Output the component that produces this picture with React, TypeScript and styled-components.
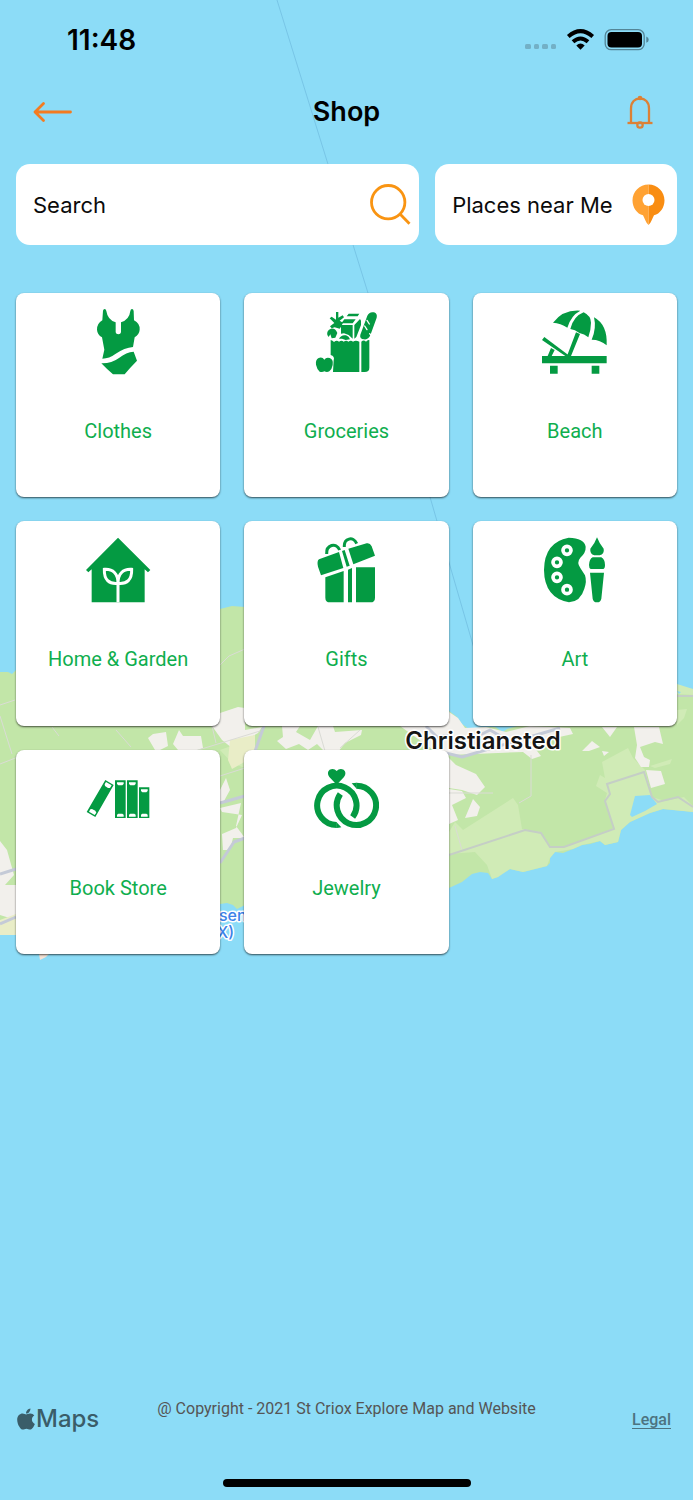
import React from 'react';
import styled, { createGlobalStyle } from 'styled-components';
import { FaApple } from 'react-icons/fa';

const GlobalStyle = createGlobalStyle`
  * { box-sizing: border-box; }
  body { margin: 0; background: #8cdcf7; }
`;

const ui = `Inter, "Liberation Sans", sans-serif`;
const label = `Roboto, "Liberation Sans", sans-serif`;

const Screen = styled.div`
  position: relative;
  min-height: 100vh;
  display: flex;
  flex-direction: column;
  overflow: hidden;
  background: #8cdcf7;
  font-family: ${ui};
  color: #000;
`;

const MapLayer = styled.svg`
  position: absolute;
  inset: 0;
  width: 100%;
  height: 100%;
`;

const Content = styled.div`
  position: relative;
  flex: 1;
  display: flex;
  flex-direction: column;
`;

const StatusBar = styled.div`
  display: flex;
  align-items: center;
  justify-content: space-between;
  height: 80px;
  padding: 0 44px 0 67px;
`;

const Time = styled.span`
  font-size: 28px;
  line-height: 32px;
  font-weight: 600;
`;

const Header = styled.header`
  display: grid;
  grid-template-columns: 1fr auto 1fr;
  align-items: center;
  height: 64px;
  padding: 0 32px;
`;

const Title = styled.h1`
  margin: 0;
  font-size: 27px;
  line-height: 32px;
  font-weight: 600;
`;

const IconButton = styled.button<{ $end?: boolean }>`
  display: flex;
  padding: 0;
  border: 0;
  background: none;
  cursor: pointer;
  justify-self: ${(p) => (p.$end ? 'end' : 'start')};
`;

const Filters = styled.div`
  display: grid;
  grid-template-columns: minmax(0, 5fr) minmax(0, 3fr);
  gap: 16px;
  padding: 20px 16px 48px;
`;

const SearchBox = styled.form`
  display: flex;
  align-items: center;
  height: 81px;
  padding: 0 8px 0 17px;
  border-radius: 14px;
  background: #fff;
`;

const SearchInput = styled.input`
  flex: 1;
  min-width: 0;
  padding: 0;
  border: 0;
  outline: 0;
  background: none;
  font: 400 22px/28px ${ui};
  color: #000;
  &::placeholder { color: #0b0b0b; opacity: 1; }
`;

const NearButton = styled.button`
  display: flex;
  align-items: center;
  justify-content: space-between;
  height: 81px;
  padding: 0 12px 0 17px;
  border: 0;
  border-radius: 14px;
  background: #fff;
  font: 400 22px/28px ${ui};
  color: #0b0b0b;
  white-space: nowrap;
  cursor: pointer;
`;

const Grid = styled.main`
  display: grid;
  grid-template-columns: repeat(3, 1fr);
  gap: 24px;
  padding: 0 16px;
`;

const Card = styled.button`
  display: flex;
  flex-direction: column;
  align-items: center;
  gap: 44px;
  aspect-ratio: 1;
  padding: 16px 0 0;
  border: 0;
  border-radius: 8px;
  background: #fff;
  box-shadow: 0 1px 2px rgba(0, 0, 0, 0.65);
  font: 400 20px/24px ${label};
  color: #0fae4e;
  cursor: pointer;
`;

const CardIcon = styled.svg`
  width: 66px;
  height: 66px;
  flex: none;
  fill: #049a42;
`;

const Footer = styled.footer`
  display: grid;
  grid-template-columns: 1fr auto 1fr;
  height: 35px;
  margin: auto 16px 47px;
`;

const MapsLogo = styled.div`
  display: flex;
  align-items: center;
  align-self: end;
  height: 26px;
  font-size: 24px;
  line-height: 24px;
  font-weight: 500;
  color: #3a5d69;

  svg { margin: 0 -2px; }
`;

const Copyright = styled.p`
  margin: 0;
  font: 400 16px/24px ${label};
  color: #555;
`;

const Legal = styled.a`
  align-self: end;
  justify-self: end;
  margin-right: 6px;
  font: 500 16px/24px ${label};
  color: #4c7380;
  text-underline-offset: 3px;
`;

const HomeIndicator = styled.div`
  align-self: center;
  width: 248px;
  height: 8px;
  margin-bottom: 13px;
  border-radius: 4px;
  background: #000;
`;

const IslandMap = () => (
  <MapLayer viewBox="0 0 693 1500" preserveAspectRatio="xMidYMid slice" aria-hidden="true">
    <path d="M277 0 L368 293 L430 497 L473 645 L490 700" fill="none" stroke="#78c5e6" strokeWidth="1" />
    <path
      fill="#c2e6a8"
      d="M0 672 L8 672 L12 674 L17 669 L80 650 L150 625 L220 609 L232 606 L245 607 L330 640 L400 680 L449 711 L457 717 L462 724 L470 730 L483 727 L495 727 L503 732 L507 729 L530 722 L600 705 L677 684 L681 688 L693 689 V812 L684 811 L663 809 L650 813 L630 822 L621 830 L618 842 L605 845 L600 841 L590 844 L582 845 L573 849 L563 853 L555 852 L550 858 L550 863 L547 866 L523 872 L510 869 L503 873 L498 877 L492 879 L488 873 L480 872 L472 874 L462 882 L449 888 L350 920 L245 905 L237 909 L233 905 L227 903 L220 904 L120 925 L16 935 L0 935 Z"
    />
    <path
      fill="#d0ebb6"
      d="M449 832 L455 822 L463 830 L513 798 L518 805 L522 829 L541 832 L550 847 L565 847 L614 828 L605 800 L607 793 L596 786 L600 775 L605 778 L602 762 L628 748 L633 758 L645 770 L652 797 L665 801 L684 797 L693 806 V812 L663 809 L650 813 L630 822 L621 830 L618 842 L605 845 L600 841 L582 845 L573 849 L555 852 L550 858 L547 866 L523 872 L510 869 L498 877 L492 879 L487 865 L475 852 L449 854 Z"
    />
    <path fill="#d0ebb6" d="M650 766 L672 759 L670 764 L655 768 Z M677 710 L687 709 L684 718 L677 725 Z M220 750 L245 741 V768 L232 763 Z M677 684 L693 689 V695 L677 694 Z" />
    <path fill="#8cdcf7" d="M635 796 L650 795 L657 804 L645 811 L632 817 L630 815 Z M677 691 L681 692 L679 694 Z" />
    <g fill="#f2f0ec">
      <path d="M148 738 L153 734 L166 732 L168 746 L160 750 H155 Z M173 744 L179 730 L183 736 L201 736 L203 748 L195 751 L178 750 Z M212 726 L220 713 L238 707 L245 708 V730 L262 727 L258 733 L232 748 L222 740 Z" />
      <path d="M277 741 L283 737 L282 726 L300 726 L296 732 L310 740 L318 726 L333 726 L335 732 L362 730 L361 735 L345 743 L338 752 H325 L317 744 L308 750 L299 744 L286 749 Z" />
      <path d="M400 726 L449 712 L458 718 L465 728 L486 727 L506 732 L530 726 L570 728 L573 734 L550 739 L542 743 L530 742 L541 756 L532 759 L523 752 L449 755 L432 749 Z" />
      <path d="M582 751 L592 741 L600 747 L589 751 Z M602 727 H617 L610 737 Z M602 751 L609 752 L604 756 Z M634 727 H659 L663 744 L655 742 L640 747 L644 757 L650 760 L649 767 L641 767 L635 758 L637 745 Z M646 770 L661 771 L665 784 L651 788 Z" />
      <path d="M449 758 L456 765 L476 774 L485 787 L477 795 L462 790 L449 788 Z M449 789 L462 791 L466 798 L452 805 L458 820 L449 824 Z M473 799 L480 807 L477 816 L465 818 Z" />
      <path d="M226 778 L230 790 L224 801 L220 803 V790 Z M220 808 L241 803 L236 826 L245 838 H233 L230 850 L223 850 L222 834 L236 828 L242 815 L222 812 Z M0 841 L7 850 L14 875 L5 885 L16 885 V920 L0 915 Z" />
    </g>
    <path fill="#e9edc7" d="M0 920 L16 914 V935 H0 Z M230 740 L255 735 V756 L232 769 L228 760 Z" />
    <path fill="#f5e2d5" d="M39 954 L49 954 L46 957 L40 960 Z" />
    <g fill="none" stroke="#dadbd5" strokeWidth="1">
      <path d="M0 705 L15 700 M0 764 L18 757 M0 716 L12 754 M52 727 L59 736 M116 730 L131 747 M220 665 L229 656 L245 649 M195 751 L260 731 M212 726 L216 743 M220 776 L245 768 M318 727 L325 751 M360 730 L340 748 M449 793 L493 793 M531 755 V796 L519 803 M455 826 L462 850" />
    </g>
    <g fill="none" stroke="#c4cad7" strokeWidth="3" strokeLinejoin="round">
      <path d="M264 726 L254 754 M220 803 L245 796 M220 863 L234 842 L245 838 M0 874 L16 869 M0 924 L16 917" />
      <path d="M426 726 L437 737 L452 735 M446 753 L462 757 L560 728 M472 739 L490 730 L502 737" />
    </g>
    <path
      d="M449 855 L525 830 L541 833 L550 847 H564 L614 829 L605 801 L610 794 L607 784 L644 772 L652 797 L658 802 L678 797 L693 807 M677 696 H693"
      fill="none"
      stroke="#c5cec6"
      strokeWidth="2"
    />
    <g fontFamily={ui} stroke="#fff" strokeWidth="3" strokeLinejoin="round" paintOrder="stroke">
      <text x="483" y="749" fontSize="24" fontWeight="600" fill="#151515" textAnchor="middle">Christiansted</text>
      <text x="219" y="921" fontSize="16" fontWeight="500" fill="#3b82e8">sen</text>
      <text x="217" y="938" fontSize="16" fontWeight="500" fill="#3b82e8">X)</text>
    </g>
  </MapLayer>
);

const StatusIcons = () => (
  <svg width="124" height="22" viewBox="0 0 124 22" aria-hidden="true">
    <g fill="#73b0c6">
      <rect x="0" y="15" width="6" height="5" rx="1.5" />
      <rect x="9" y="15" width="5" height="5" rx="1.5" />
      <rect x="17" y="15" width="6" height="5" rx="1.5" />
      <rect x="26" y="15" width="5" height="5" rx="1.5" />
    </g>
    <g fill="none" stroke="#000" strokeWidth="4">
      <path d="M43.300 7.500 Q55.500 -3.200 67.700 7.500" />
      <path d="M48 12.800 Q55.500 6.200 63 12.800" />
    </g>
    <path d="M51.300 16.400 Q55.500 12.400 59.700 16.400 L55.500 20.800 Z" />
    <rect x="80.200" y="0.700" width="39" height="20" rx="6" fill="none" stroke="#538597" strokeWidth="1.300" />
    <rect x="82.500" y="3" width="34.500" height="15.400" rx="4" />
    <path d="M121.300 7.500 Q123.700 8.400 123.700 10.700 Q123.700 13 121.300 13.800 Z" fill="#538597" />
  </svg>
);

const ArrowIcon = () => (
  <svg width="41" height="24" viewBox="0 0 41 24" fill="none" stroke="#f47b20" strokeWidth="2.800" strokeLinecap="round" strokeLinejoin="round">
    <path d="M38.500 12 H3 M11.500 3.500 L3 12 L11.500 20.500" />
  </svg>
);

const BellIcon = () => (
  <svg width="38" height="34" viewBox="0 0 38 34" fill="none" stroke="#dc8136" strokeWidth="2.300">
    <path d="M8 27.500 V13.500 C8 7 12 3.500 17 3.500 C22 3.500 26 7 26 13.500 V27.500" />
    <path d="M4.500 28 H29.500" />
    <circle cx="17" cy="30" r="2.700" />
    <circle cx="17" cy="3" r="2.300" fill="#dc8136" stroke="none" />
  </svg>
);

const SearchIcon = () => (
  <svg width="41" height="41" viewBox="0 0 41 41" fill="none" stroke="#f99412" strokeWidth="2.800">
    <circle cx="18.200" cy="18.200" r="16.700" />
    <path d="M30 30 L39.500 39.700" />
  </svg>
);

const PinIcon = () => (
  <svg width="33" height="42" viewBox="0 0 33 42">
    <path fill="#ffa233" d="M16.500 0.500 V41 C13.500 38 12.500 34 11 31.200 C5 30 0.500 23.500 0.500 16.500 C0.500 7.500 7.500 0.500 16.500 0.500 Z" />
    <path fill="#f98d12" d="M16.500 0.500 V41 C19.500 38 20.500 34 22 31.200 C28 30 32.500 23.500 32.500 16.500 C32.500 7.500 25.500 0.500 16.500 0.500 Z" />
    <circle cx="16.500" cy="16" r="6" fill="#fff" />
  </svg>
);

const categories: { name: string; box: string; art: React.ReactNode }[] = [
  {
    name: 'Clothes',
    box: '15 27 198 198',
    art: (
      <>
        <path d="M69 32 Q70 27 74 27 Q78 27 79 33 Q83 60 107 67 V97 Q108 103 115 103 Q122 103 123 97 V67 Q148 59 151 33 Q152 27 156 27 Q160 27 161 33 L162 61 Q180 70 179 89 Q178 103 164 112 L159 141 Q134 143 106 162 Q88 176 67 176 L73 149 L66 112 Q52 104 51 89 Q51 70 67 61 Z" />
        <path d="M64 190 Q94 191 117 174 Q139 156 161 155 L171 182 Q150 203 134 223 H99 Q82 209 64 190 Z" />
      </>
    ),
  },
  {
    name: 'Groceries',
    box: '21 27 198 198',
    art: (
      <>
        <path d="M90 36 H97 V53 L110 46 L114 52 L101 62 L111 68 L106 79 L101 86 L86 82 L77 85 L72 79 L85 69 L71 55 L77 50 L90 59 Z" />
        <path d="M128 41 H160 L155 49 H122 Z M115 58 H149 L140 70 H106 Z M105 75 H140 V116 L128 105 L114 100 L105 101 Z M145 75 L162 57 L165 62 V75 L151 111 L145 116 Z" />
        <path d="M163 104 L184 47 Q190 34 204 37 Q215 41 212 53 L193 106 Q187 120 174 118 Q160 116 163 104 Z" />
        <path fill="none" stroke="#fff" strokeWidth="4" strokeLinecap="round" d="M183 61 L190 72 M176 78 L183 89 M191 101 L195 106" />
        <path d="M64 105 Q61 91 75 86 Q88 84 94 99 L88 113 L77 115 L73 103 L68 111 Z M99 116 Q106 103 120 106 Q129 109 132 118 L119 120 L108 116 Z" />
        <path d="M74 120 Q80 121 84 126 Q92 119 99 125 Q107 119 113 125 Q121 119 127 125 Q135 119 141 125 Q149 119 160 125 V216 H81 L83 181 Q87 169 74 165 Z" />
        <path d="M166 125 Q173 118 180 125 Q184 119 190 120 V203 Q190 216 176 216 H166 Z" />
        <path d="M55 179 Q49 170 38 174 Q28 179 30 194 Q33 208 41 215 Q49 218 55 214 Q63 218 70 214 Q78 207 80 195 Q83 178 71 174 Q60 171 55 179 Z" />
      </>
    ),
  },
  {
    name: 'Beach',
    box: '24 27 198 198',
    art: (
      <>
        <path d="M57 68 Q88 28 139 32 Q111 46 100 83 Q80 69 57 68 Z M109 87 Q118 49 149 37 Q171 48 171 68 Q171 88 163 112 Q151 101 136 99 Q123 88 109 87 Z M173 119 Q188 85 180 52 Q221 74 218 136 Q199 119 173 119 Z" />
        <path d="M126 97 L138 102 L111 168 H99 Z M31 111 L107 168 H94 L24 120 Z M51 144 L62 150 L53 168 H41 Z" />
        <path d="M24 168 H218 V190 H24 Z M48 197 H71 V221 H48 Z M173 197 H196 V221 H173 Z" />
      </>
    ),
  },
  {
    name: 'Home & Garden',
    box: '22 22 198 198',
    art: (
      <>
        <path d="M121 24 L218 121 L211 128 L201 119 V218 H42 V119 L32 128 L25 121 Z" />
        <path fill="none" stroke="#fff" strokeWidth="9" d="M121 218 V158 M121 161 C94 164 79 150 80 119 C106 117 121 132 121 161 C121 132 136 117 162 119 C163 150 148 164 121 161 Z" />
      </>
    ),
  },
  {
    name: 'Gifts',
    box: '21 22 198 198',
    art: (
      <>
        <path d="M39 89 L99 67 L112 115 L45 137 L36 111 Q32 94 39 89 Z M108 64 L116 61 L131 108 L122 111 Z M127 57 L182 41 Q192 39 197 50 L207 78 L142 104 Z" />
        <g fill="none" stroke="#049a42" strokeWidth="9">
          <path d="M62 73 C60 46 90 36 101 61" />
          <path d="M115 52 C113 26 142 18 152 42" />
        </g>
        <path d="M58 143 L113 124 V218 H72 Q58 218 58 204 Z M126 120 L138 115 V218 H126 Z M150 113 H207 V204 Q207 218 193 218 H150 Z" />
      </>
    ),
  },
  {
    name: 'Art',
    box: '24 22 198 198',
    art: (
      <>
        <path d="M104 24 Q151 25 155 51 Q156 69 139 84 Q127 98 139 115 L153 137 Q159 155 151 177 Q140 215 105 218 Q31 204 30 121 Q31 37 104 24 Z" />
        <g fill="#049a42" stroke="#fff" strokeWidth="11">
          <circle cx="99" cy="62" r="12" />
          <circle cx="69" cy="98" r="12" />
          <circle cx="69" cy="143" r="12" />
          <circle cx="99" cy="180" r="12" />
        </g>
        <path d="M189 23 Q196 42 209 57 Q212 73 197 77 H181 Q167 73 169 57 Q182 43 189 23 Z M176 83 H202 Q213 89 213 106 Q213 117 208 118 H170 Q165 116 165 106 Q166 88 176 83 Z M168 129 H210 L202 207 Q200 218 189 218 Q178 218 176 207 Z" />
      </>
    ),
  },
  {
    name: 'Book Store',
    box: '22 5 198 198',
    art: (
      <>
        <path d="M112 48 H144 V161 H112 Z M148 48 H180 V161 H148 Z M184 69 H215 V161 H184 Z M83 47 L108 62 L53 158 L27 143 Z" />
        <g fill="#fff">
          <path d="M118 54 H138 V59 L134 63 H122 L118 59 Z M154 54 H174 V59 L170 63 H158 L154 59 Z M190 75 H210 V80 L206 84 H194 L190 80 Z" />
          <path d="M118 157 H138 V151 L134 148 H122 L118 151 Z M154 157 H174 V151 L170 148 H158 L154 151 Z M190 157 H210 V151 L206 148 H194 L190 151 Z" />
          <path d="M85 53 L102 63 L97 71 L91 71 L82 65 L81 60 Z M34 142 L51 152 L56 145 L53 139 L43 134 L38 135 Z" />
        </g>
      </>
    ),
  },
  {
    name: 'Jewelry',
    box: '705 5 198 198',
    art: (
      <>
        <path d="M776 61 L754 38 Q745 24 755 16 Q768 11 776 20 Q784 11 797 16 Q807 24 798 38 Z" />
        <g fill="none" stroke="#049a42" strokeWidth="18">
          <path d="M776 182 A59 59 0 1 1 824 158" />
          <path d="M835 64 A59 59 0 1 1 787 89" />
        </g>
        <path d="M775 173 L790 189 Q783 191 775 191 Z M836 73 L821 57 Q828 55 836 55 Z" />
      </>
    ),
  },
];

export default function App() {
  return (
    <Screen>
      <GlobalStyle />
      <IslandMap />
      <Content>
        <StatusBar>
          <Time>11:48</Time>
          <StatusIcons />
        </StatusBar>
        <Header>
          <IconButton type="button" aria-label="Back"><ArrowIcon /></IconButton>
          <Title>Shop</Title>
          <IconButton type="button" aria-label="Notifications" $end><BellIcon /></IconButton>
        </Header>
        <Filters>
          <SearchBox onSubmit={(e) => e.preventDefault()}>
            <SearchInput type="text" placeholder="Search" aria-label="Search" />
            <IconButton type="submit" aria-label="Submit search"><SearchIcon /></IconButton>
          </SearchBox>
          <NearButton type="button">
            Places near Me
            <PinIcon />
          </NearButton>
        </Filters>
        <Grid>
          {categories.map((c) => (
            <Card type="button" key={c.name}>
              <CardIcon viewBox={c.box} aria-hidden="true">{c.art}</CardIcon>
              {c.name}
            </Card>
          ))}
        </Grid>
        <Footer>
          <MapsLogo><FaApple size={24} />Maps</MapsLogo>
          <Copyright>@ Copyright - 2021 St Criox Explore Map and Website</Copyright>
          <Legal href="#legal">Legal</Legal>
        </Footer>
        <HomeIndicator />
      </Content>
    </Screen>
  );
}
